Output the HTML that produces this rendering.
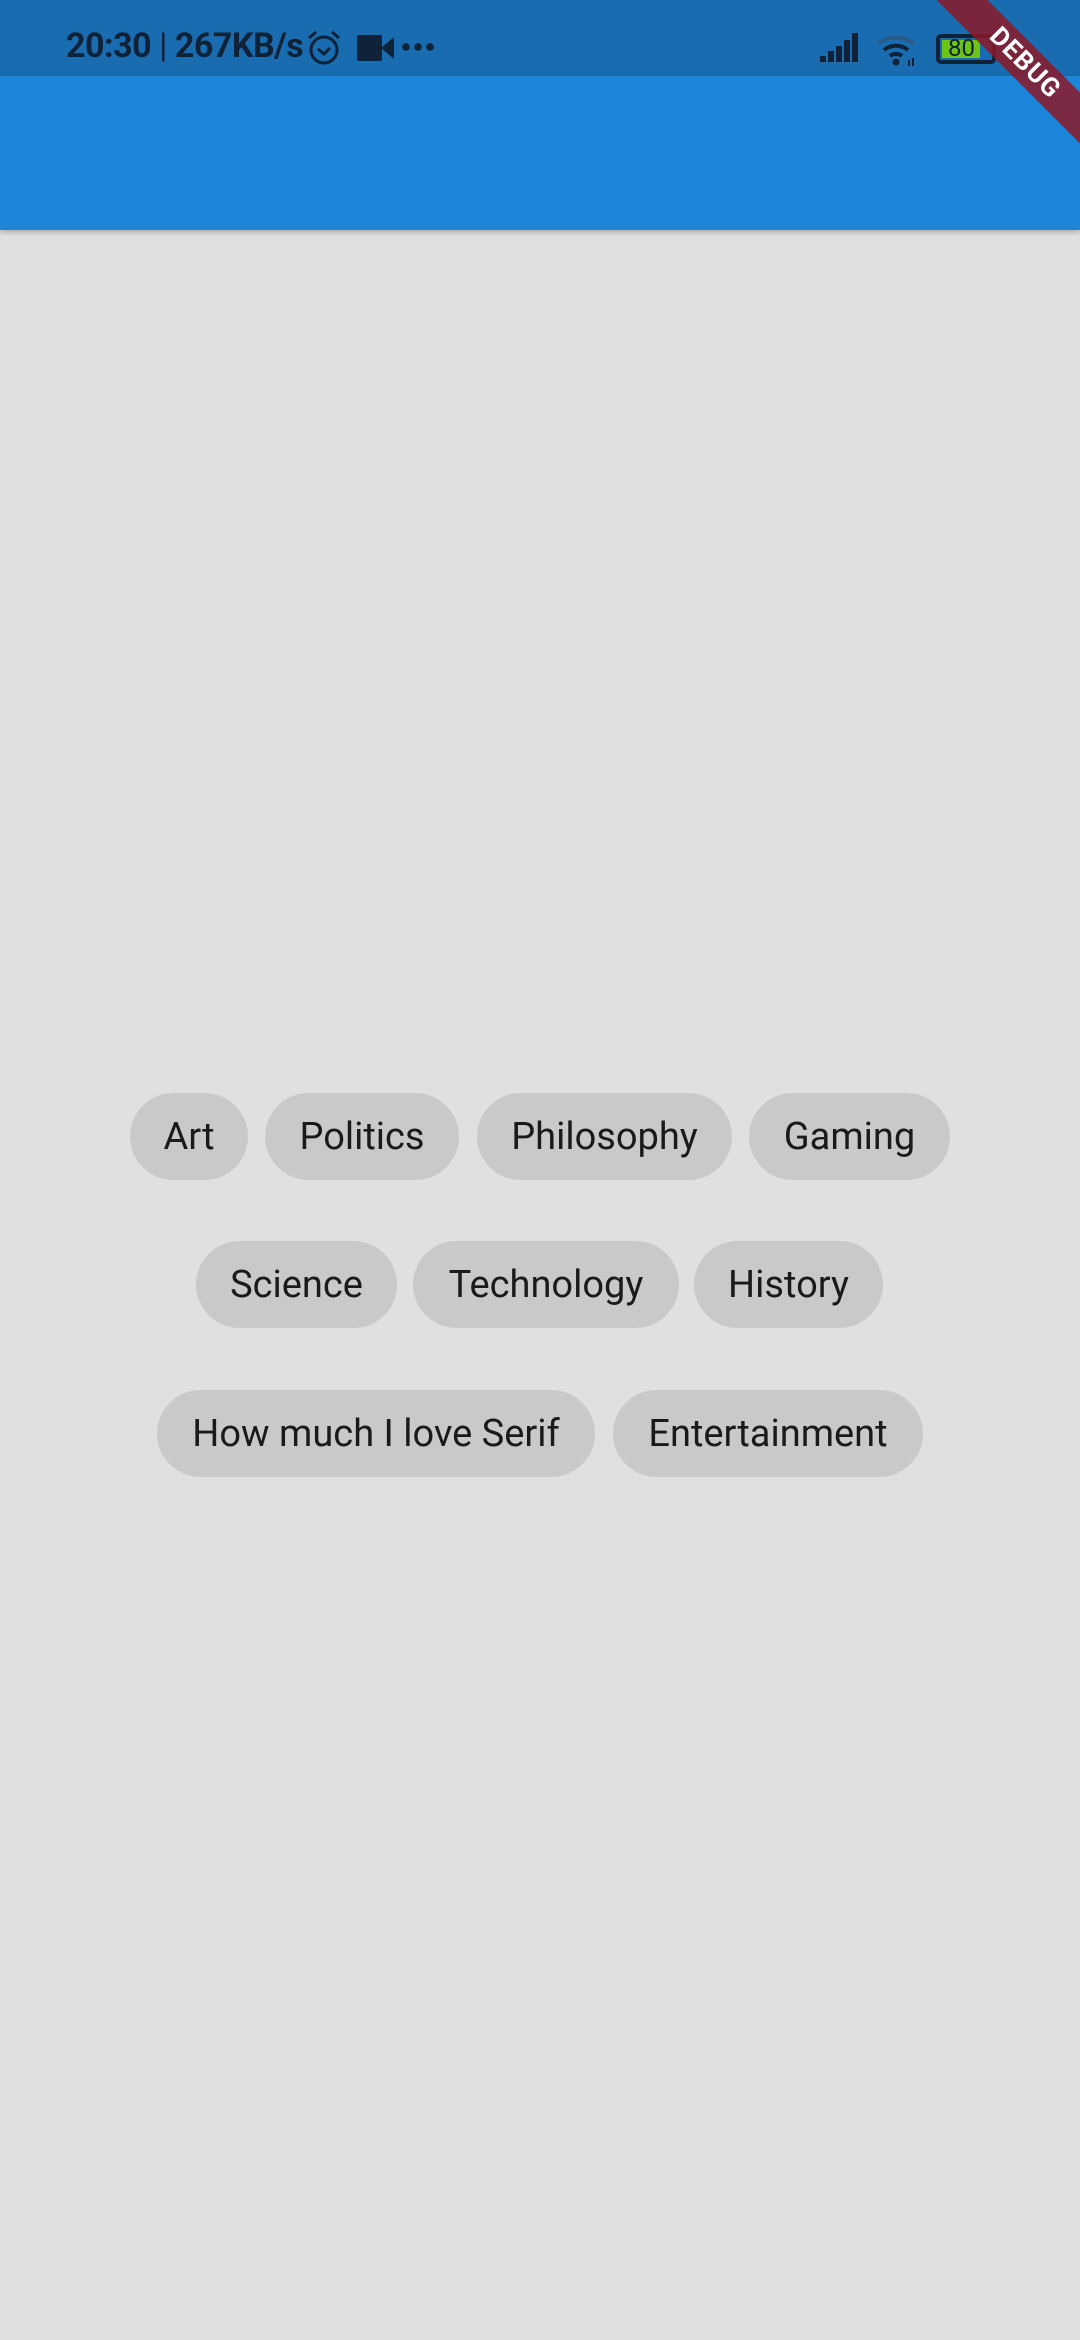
<!DOCTYPE html>
<html><head><meta charset="utf-8"><style>
*{margin:0;padding:0;box-sizing:border-box}
body{width:1080px;height:2340px;background:#e0e0e0;position:relative;overflow:hidden;font-family:"Roboto","Liberation Sans",sans-serif}
.sb{position:absolute;left:0;top:0;width:1080px;height:76px;background:#1a6cb1}
.ab{position:absolute;left:0;top:76px;width:1080px;height:154px;background:#1c86db;box-shadow:0 2px 5px rgba(0,0,0,.25)}
.st{position:absolute;left:66px;top:26px;font-size:34px;font-weight:bold;color:#0f2238;letter-spacing:-0.5px;white-space:nowrap}
.chip{position:absolute;height:87px;border-radius:44px;background:#c9c9ca;color:#1a1a1a;font-size:38px;display:flex;align-items:center;justify-content:center;white-space:nowrap}
.banner{position:absolute;left:880px;top:45px;width:290px;height:36px;background:rgba(140,25,40,.85);transform-origin:center;transform:rotate(45deg);color:#fff;font-weight:bold;font-size:26px;text-align:center;line-height:36px;letter-spacing:1px}
</style></head><body>
<div class="sb"></div>
<div class="ab"></div>
<div class="st">20:30 <span style="font-weight:normal">|</span> 267KB/s</div>
<svg style="position:absolute;left:306px;top:30px" width="36" height="36" viewBox="0 0 36 36"><circle cx="18" cy="20" r="13" fill="none" stroke="#0f2238" stroke-width="3"/><path d="M12 19l6 5 6-6M3 8l7-6M33 8l-7-6" fill="none" stroke="#0f2238" stroke-width="3"/></svg>
<svg style="position:absolute;left:357px;top:35px" width="38" height="26" viewBox="0 0 38 26"><rect x="0" y="0" width="25" height="26" rx="2" fill="#0f2238"/><path d="M24 13L37 2V24Z" fill="#0f2238"/></svg>
<div style="position:absolute;left:400px;top:43px;width:36px;height:8px;background:radial-gradient(circle,#0f2238 3.5px,transparent 4px) 0 0/12px 8px repeat-x"></div>
<svg style="position:absolute;left:818px;top:32px" width="42" height="32" viewBox="0 0 42 32"><path d="M2 30h6v-6h-6zM10 30h6v-11h-6zM18 30h6v-16h-6zM26 30h6v-22h-6zM34 30h6v-29h-6z" fill="#0f2238"/></svg>
<svg style="position:absolute;left:876px;top:32px" width="44" height="36" viewBox="0 0 44 36"><path d="M2 12a28 28 0 0 1 36 0" fill="none" stroke="#2a5a88" stroke-width="4"/><path d="M8 18a19 19 0 0 1 24 0" fill="none" stroke="#0f2238" stroke-width="4"/><path d="M14 24a10 10 0 0 1 12 0" fill="none" stroke="#0f2238" stroke-width="4"/><circle cx="20" cy="30" r="3.5" fill="#0f2238"/><path d="M33 28v6M37 26v8" stroke="#0f2238" stroke-width="2"/></svg>
<div style="position:absolute;left:936px;top:34px;width:60px;height:30px;border:4px solid #0f2238;border-radius:5px"></div>
<div style="position:absolute;left:942px;top:40px;width:38px;height:18px;background:#6cc417"></div>
<div style="position:absolute;left:948px;top:34px;font-size:24px;color:#0f2238">80</div>
<div class="banner">DEBUG</div>

<div class="chip" style="left:130px;top:1093px;width:118px">Art</div>
<div class="chip" style="left:265px;top:1093px;width:194px">Politics</div>
<div class="chip" style="left:477px;top:1093px;width:255px">Philosophy</div>
<div class="chip" style="left:749px;top:1093px;width:201px">Gaming</div>
<div class="chip" style="left:196px;top:1241px;width:201px">Science</div>
<div class="chip" style="left:413px;top:1241px;width:266px">Technology</div>
<div class="chip" style="left:694px;top:1241px;width:189px">History</div>
<div class="chip" style="left:157px;top:1390px;width:438px">How much I love Serif</div>
<div class="chip" style="left:613px;top:1390px;width:310px">Entertainment</div>
</body></html>
